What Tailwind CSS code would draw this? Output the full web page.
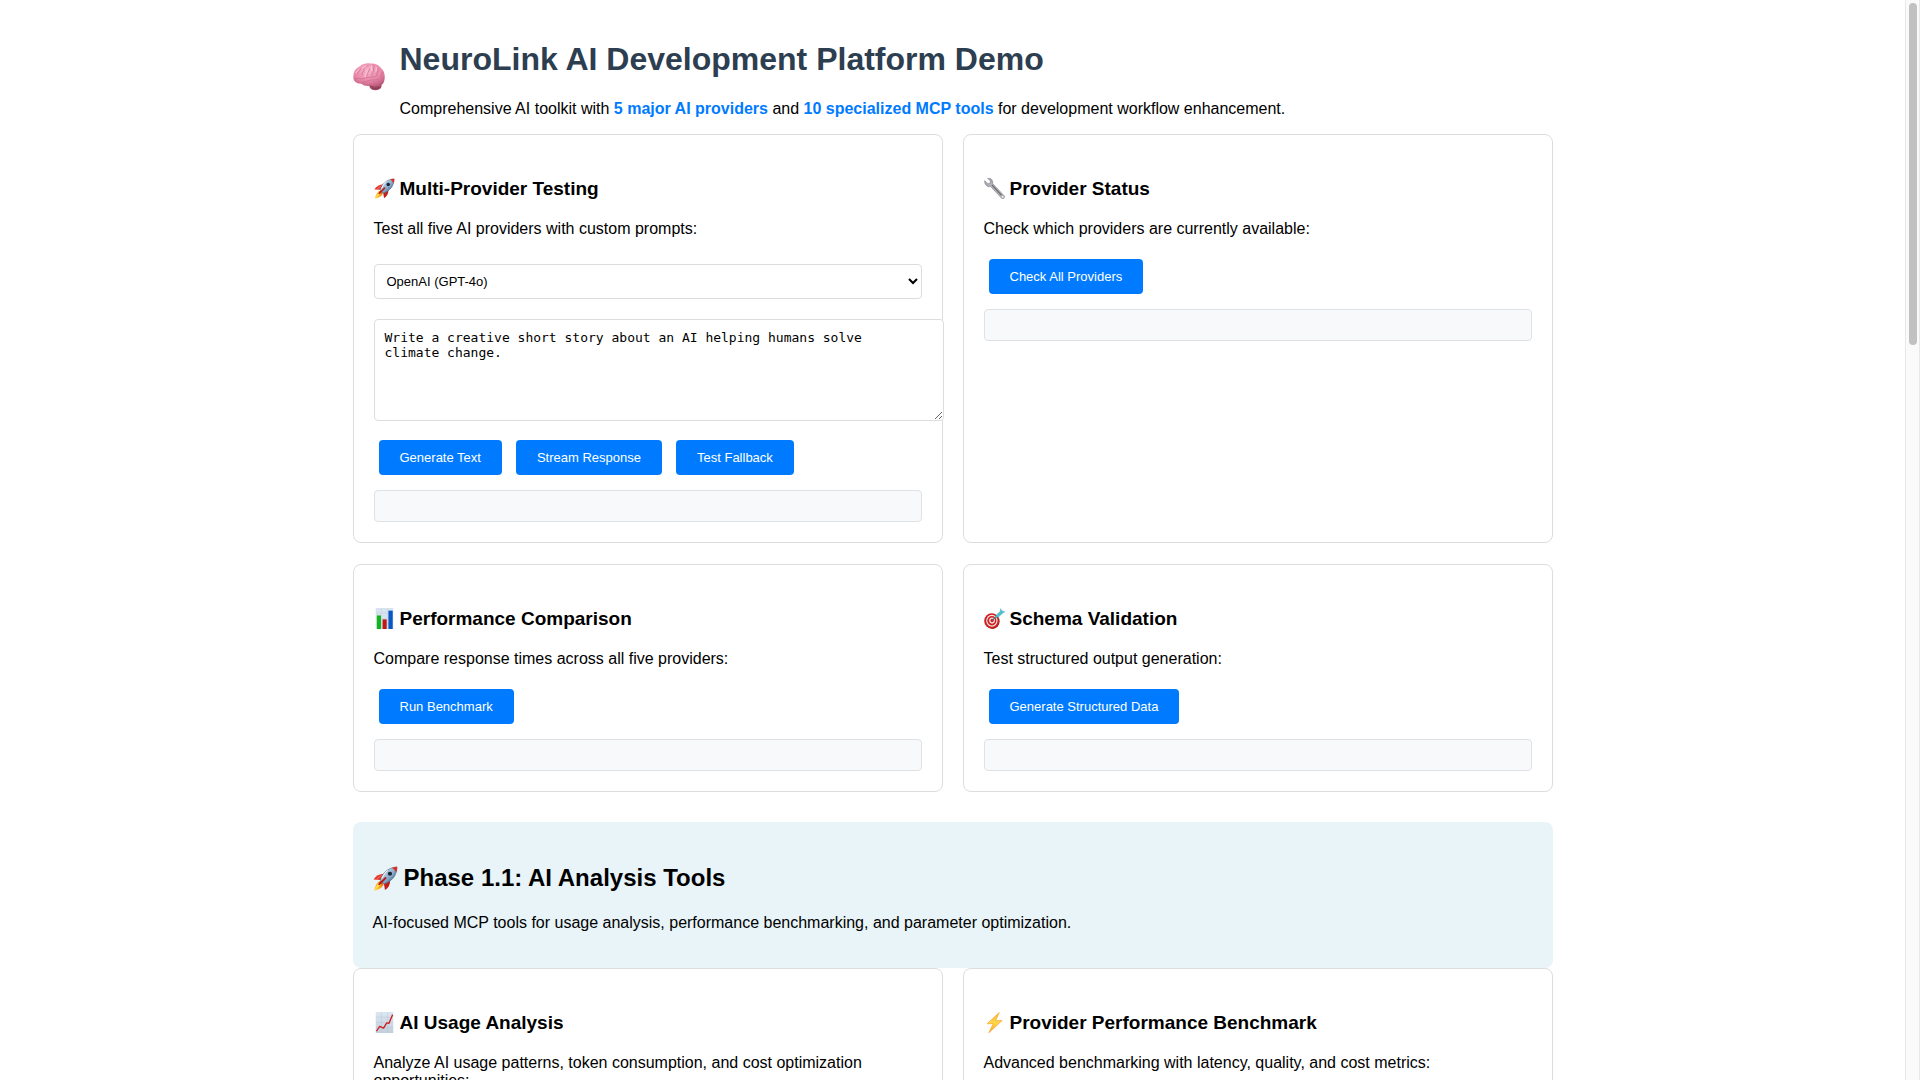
<!DOCTYPE html>
<html lang="en">
<head>
<meta charset="utf-8">
<meta name="viewport" content="width=device-width, initial-scale=1">
<title>NeuroLink AI Development Platform Demo</title>
<script src="https://cdn.jsdelivr.net/npm/@tailwindcss/browser@4"></script>
</head>
<body class="flex h-screen overflow-hidden bg-white font-['Liberation_Sans',Arial,sans-serif] text-base leading-[18px] text-black">

<!-- Shared gradients and the rocket, which is used in two headings -->
<svg class="absolute size-0" aria-hidden="true">
  <defs>
    <linearGradient id="hull" x1="0" y1="0" x2="1" y2="1"><stop offset="0" stop-color="#f4f7fa"/><stop offset=".5" stop-color="#8fb4d4"/><stop offset="1" stop-color="#26496f"/></linearGradient>
    <linearGradient id="steel" x1="0" y1="1" x2="1" y2="0"><stop offset="0" stop-color="#77777c"/><stop offset=".5" stop-color="#b4b7bb"/><stop offset="1" stop-color="#5c5c62"/></linearGradient>
    <linearGradient id="paper" x1="0" y1="0" x2="0" y2="1"><stop offset="0" stop-color="#dbe7f2"/><stop offset="1" stop-color="#c3cfdb"/></linearGradient>
    <linearGradient id="bolt" x1="0" y1="0" x2="0" y2="1"><stop offset="0" stop-color="#fbb32f"/><stop offset=".5" stop-color="#ffd94a"/><stop offset="1" stop-color="#f9a51d"/></linearGradient>
    <linearGradient id="flame" x1="1" y1="0" x2="0" y2="1"><stop offset="0" stop-color="#e8431a"/><stop offset=".5" stop-color="#fb9b1e"/><stop offset="1" stop-color="#ffe45a"/></linearGradient>
    <radialGradient id="lobe" cx=".45" cy=".3" r=".75"><stop offset="0" stop-color="#f9b4cb"/><stop offset=".6" stop-color="#ea86a8"/><stop offset="1" stop-color="#b9577a"/></radialGradient>
    <symbol id="rocket" viewBox="0 0 24 24">
      <path d="M8.500 14 C5 14.500 2 18 1 23.500 C6 23 9.500 20.500 10.500 16Z" fill="url(#flame)"/>
      <path d="M5 16 L1.500 23 L8 18Z" fill="#ffe04a"/>
      <path d="M10.500 7.500 C6 7.500 3 9.500 .5 13 L7.500 13.500Z" fill="#e5352b"/>
      <path d="M16.500 13.500 C16.500 18 15 21 11.500 23 L10.500 17Z" fill="#c41e1a"/>
      <path d="M3.500 12.500 L8.500 8.800" stroke="#ff8064" stroke-width=".9"/>
      <path d="M7 13.500 C9 7 14 1.500 22.800 1 C23.200 9.500 17.500 15 10.500 17.300Z" fill="url(#hull)" stroke="#3d5877" stroke-width=".5"/>
      <path d="M18.200 1.800 C20 1 22 .8 23.300 .8 C23.300 3 23 4.500 22.300 6.300 C21.400 4.200 20 2.700 18.200 1.800Z" fill="#d63029"/>
      <circle cx="16.300" cy="7.400" r="2.900" fill="#9db0c4"/><circle cx="16.300" cy="7.400" r="2" fill="#15243a"/>
      <path d="M8.500 12 C10.500 8 12 5.800 14 4.400" stroke="#fff" stroke-width=".9" fill="none"/>
      <path d="M6 17.500 L12 11.500" stroke="#b71c1c" stroke-width="1.900" stroke-linecap="round"/>
    </symbol>
  </defs>
</svg>

<main class="min-w-0 flex-1 overflow-hidden px-5 pt-5">
  <div class="mx-auto max-w-[1200px]">

    <header class="flex items-center gap-[15px]">
      <svg class="size-8 shrink-0" viewBox="0 0 32 32" role="img" aria-label="Brain">
        <path d="M16 23 C16 27 19 30 24 29 C27.500 28.500 29 26.500 28.500 23.500Z" fill="#a04a64"/>
        <path d="M17 24.500 L27 26.500 M18.500 27 L25.500 28" stroke="#7c3049" stroke-width=".6"/>
        <path d="M2.500 21 C.5 19.500 0 17 .5 14.500 C.5 10.500 3 7 6.500 5.500 C9.500 2.500 14 2 17.500 2.500 C22 2 26 4 28 7 C31 9.500 32.300 14 31.500 18 C31.500 21.500 29.500 24 26.500 25 C23.500 26.200 20.500 25.800 18.500 24.500 C15 25.500 10.500 25 8 22.500 C5.500 22.800 3.500 22 2.500 21Z" fill="url(#lobe)"/>
        <path d="M2 18 C5 16 8 19 11 17.500 C15 15 19 18 24 14.500 M8 22.500 C9 20 13 21 16 19.500 C19 18 22 20 25 18 M4 13 C4.500 10 7 11 7.500 8 M9 14 C8 11 12 11 11 7.500 C12 5.500 14 6.500 15 4.500 M14 14.500 C13 11.500 17 11 16.500 8 M19 14.500 C18 11 22 11 20.500 7 C22 6 21 4.500 20 4 M24 14 C23 11.500 26 10.500 25 7.500 M27 17 C29.500 15.500 27.500 12 29.500 11 M19 24.500 C21 21.500 24 23.500 27 21 C29 20 29 18.500 31 18" fill="none" stroke="#c8708f" stroke-width=".8" stroke-linecap="round"/>
        <path d="M6 8.500 C5 9.500 4 10 3 12 M13 5.500 C11.500 6 10.500 6 9.500 7 M18.500 5 C18 6.500 18.500 7 18.500 9 M23 6 C24 7 23 8.500 23 10 M12 16 C11.500 14 14 12.500 14 10.500" fill="none" stroke="#fdd0df" stroke-width="1" stroke-linecap="round"/>
      </svg>
      <div>
        <h1 class="mt-[21px] text-[32px] leading-[37px] font-bold text-[#2c3e50]">NeuroLink AI Development Platform Demo</h1>
        <p class="mt-[22px] mb-4">Comprehensive AI toolkit with <strong class="text-[#007bff]">5 major AI providers</strong> and <strong class="text-[#007bff]">10 specialized MCP tools</strong> for development workflow enhancement.</p>
      </div>
    </header>

    <div class="grid grid-cols-2 gap-x-5 gap-y-[21px]">

      <section class="rounded-lg border border-[#ddd] p-5">
        <h3 class="mt-5 mb-[18px] flex items-center gap-[5px] text-[19px] leading-[27px] font-bold">
          <svg class="size-[21px]" aria-hidden="true"><use href="#rocket"/></svg>Multi-Provider Testing</h3>
        <p>Test all five AI providers with custom prompts:</p>
        <select aria-label="Provider" class="mt-[26px] block h-[35px] w-full rounded-sm border border-[#ddd] bg-white p-2 text-[13px]">
          <option>OpenAI (GPT-4o)</option>
        </select>
        <textarea aria-label="Prompt" class="mt-5 mb-[14px] block h-[102px] w-[calc(100%+22px)] resize rounded-sm border border-[#ddd] bg-white p-[10px] font-['DejaVu_Sans_Mono',monospace] text-[13px] leading-[15px]">Write a creative short story about an AI helping humans solve
climate change.</textarea>
        <div class="flex gap-[14px] p-[5px]">
          <button type="button" class="h-[35px] rounded-sm bg-[#007bff] px-[21px] text-[13px] text-white">Generate Text</button>
          <button type="button" class="h-[35px] rounded-sm bg-[#007bff] px-[21px] text-[13px] text-white">Stream Response</button>
          <button type="button" class="h-[35px] rounded-sm bg-[#007bff] px-[21px] text-[13px] text-white">Test Fallback</button>
        </div>
        <div class="mt-[10px] h-8 rounded-sm border border-[#dee2e6] bg-[#f8f9fa]"></div>
      </section>

      <section class="rounded-lg border border-[#ddd] p-5">
        <h3 class="mt-5 mb-[18px] flex items-center gap-[5px] text-[19px] leading-[27px] font-bold">
          <svg class="size-[21px]" viewBox="0 0 24 24" aria-hidden="true">
            <path d="M.8 3 L4.500 6.500 L7 5.800 L7.400 3.500 L4 .3 C7.500 -.5 10.500 2 10 6.500 L23.300 20.500 C24 22.500 22.500 24 20.500 23.500 L7.500 9.800 C3.500 10.800 .2 7 .8 3Z" fill="url(#steel)" stroke="#77787d" stroke-width=".6"/>
            <path d="M9 8 L20 19.700" stroke="#5d5658" stroke-width="1.200"/>
            <circle cx="21.300" cy="21.600" r=".9" fill="#fff"/>
          </svg>Provider Status</h3>
        <p class="mb-4">Check which providers are currently available:</p>
        <div class="flex p-[5px]">
          <button type="button" class="h-[35px] rounded-sm bg-[#007bff] px-[21px] text-[13px] text-white">Check All Providers</button>
        </div>
        <div class="mt-[10px] h-8 rounded-sm border border-[#dee2e6] bg-[#f8f9fa]"></div>
      </section>

      <section class="rounded-lg border border-[#ddd] p-5">
        <h3 class="mt-5 mb-[18px] flex items-center gap-[5px] text-[19px] leading-[27px] font-bold">
          <svg class="size-[21px]" viewBox="0 0 24 24" aria-hidden="true">
            <rect x="2" y="0" width="20" height="24" fill="#d7e3ef"/>
            <path d="M2 6H22M2 12H22M2 18H22M8.500 0V24M15.500 0V24" stroke="#bccbd9" stroke-width=".4"/>
            <rect x="3.300" y="8.500" width="4.700" height="15.500" fill="#12b41a"/>
            <rect x="9.800" y="13" width="4.700" height="11" fill="#c01717"/>
            <rect x="16.500" y="3" width="4.900" height="21" fill="#0a56c2"/>
          </svg>Performance Comparison</h3>
        <p class="mb-4">Compare response times across all five providers:</p>
        <div class="flex p-[5px]">
          <button type="button" class="h-[35px] rounded-sm bg-[#007bff] px-[21px] text-[13px] text-white">Run Benchmark</button>
        </div>
        <div class="mt-[10px] h-8 rounded-sm border border-[#dee2e6] bg-[#f8f9fa]"></div>
      </section>

      <section class="rounded-lg border border-[#ddd] p-5">
        <h3 class="mt-5 mb-[18px] flex items-center gap-[5px] text-[19px] leading-[27px] font-bold">
          <svg class="size-[21px]" viewBox="0 0 24 24" aria-hidden="true">
            <ellipse cx="9.800" cy="15.500" rx="8" ry="8.400" fill="#8e1414"/>
            <ellipse cx="8.800" cy="14.800" rx="8.600" ry="8.700" fill="#cf2020"/>
            <ellipse cx="9" cy="14.600" rx="6.500" ry="6.800" fill="#f3e3e1"/>
            <ellipse cx="9" cy="14.600" rx="5.200" ry="5.400" fill="#cf2020"/>
            <ellipse cx="9.200" cy="14.400" rx="3.300" ry="3.500" fill="#f3e3e1"/>
            <ellipse cx="9.300" cy="14.300" rx="1.900" ry="2" fill="#cf2020"/>
            <path d="M9.500 14 L19 5.500" stroke="#4d6f7a" stroke-width="1.200"/>
            <path d="M13 11 L14 8 L18.500 4 L19 .8 L20.500 3.300 L23.800 4.300 L21.500 5.800 L17 9.800Z" fill="#4cc3d0" stroke="#2b8d9e" stroke-width=".4"/>
          </svg>Schema Validation</h3>
        <p class="mb-4">Test structured output generation:</p>
        <div class="flex p-[5px]">
          <button type="button" class="h-[35px] rounded-sm bg-[#007bff] px-[21px] text-[13px] text-white">Generate Structured Data</button>
        </div>
        <div class="mt-[10px] h-8 rounded-sm border border-[#dee2e6] bg-[#f8f9fa]"></div>
      </section>
    </div>

    <section class="mt-[30px] rounded-lg bg-[#e8f4f8] p-5">
      <h2 class="my-5 flex items-center gap-[6px] text-2xl leading-8 font-bold">
        <svg class="size-[25px]" aria-hidden="true"><use href="#rocket"/></svg>Phase 1.1: AI Analysis Tools</h2>
      <p class="mb-4">AI-focused MCP tools for usage analysis, performance benchmarking, and parameter optimization.</p>
    </section>

    <div class="grid grid-cols-2 gap-x-5 gap-y-[21px]">
      <section class="rounded-lg border border-[#ddd] p-5">
        <h3 class="mt-5 mb-[18px] flex items-center gap-[5px] text-[19px] leading-[27px] font-bold">
          <svg class="size-[21px]" viewBox="0 0 24 24" aria-hidden="true">
            <rect x="2" y="0" width="20" height="24" fill="url(#paper)"/>
            <path d="M2 6H22M2 12H22M2 18H22M8.500 0V24M15.500 0V24" stroke="#b3c1ce" stroke-width=".4"/>
            <path d="M2.800 22 L6.500 16.500 L11 18.500 L14.500 12.500 L17 13 L21.300 3" fill="none" stroke="#cf1f22" stroke-width="1.500" stroke-linejoin="round"/>
          </svg>AI Usage Analysis</h3>
        <p class="mb-4">Analyze AI usage patterns, token consumption, and cost optimization opportunities:</p>
      </section>
      <section class="rounded-lg border border-[#ddd] p-5">
        <h3 class="mt-5 mb-[18px] flex items-center gap-[5px] text-[19px] leading-[27px] font-bold">
          <svg class="size-[21px]" viewBox="0 0 24 24" aria-hidden="true">
            <path d="M17.500 .5 L3.500 13.500 L10.500 13.300 L5.500 23.800 L20.800 9.800 L13.300 10Z" fill="url(#bolt)" stroke="#f59d24" stroke-width=".7" stroke-linejoin="round"/>
          </svg>Provider Performance Benchmark</h3>
        <p class="mb-4">Advanced benchmarking with latency, quality, and cost metrics:</p>
      </section>
    </div>

  </div>
</main>

<!-- Page scroll track -->
<div class="w-[15px] shrink-0 border-x border-[#e8e8e8] bg-[#fafafa] px-[3px] pt-[3px]" aria-hidden="true">
  <div class="h-[31.8%] w-2 rounded-full bg-[#c1c1c1]"></div>
</div>
</body>
</html>
